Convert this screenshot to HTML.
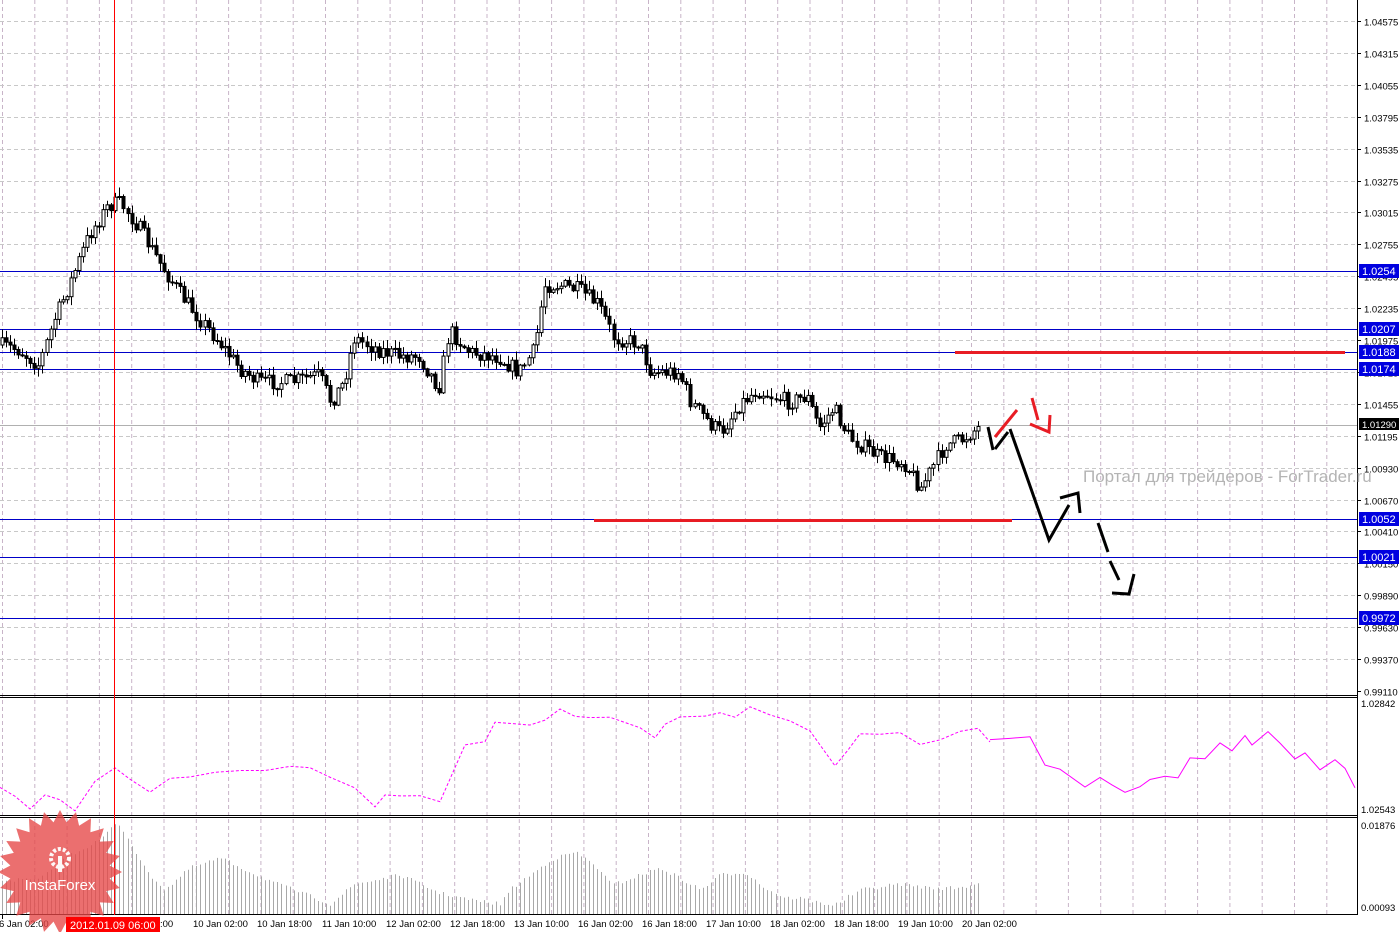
<!DOCTYPE html>
<html><head><meta charset="utf-8"><style>
html,body{margin:0;padding:0;background:#fff;width:1399px;height:932px;overflow:hidden}
svg{display:block;font-family:"Liberation Sans",Tahoma,sans-serif}
.ax{font-size:9.5px;fill:#000}
.lb{font-size:11px;fill:#fff}
</style></head><body>
<svg id="s" width="1399" height="932" xmlns="http://www.w3.org/2000/svg">
<rect width="1399" height="932" fill="#fff"/>
<g id="grid"></g>
<g id="vol"></g>
<g id="ind"></g>
<g stroke="#000" stroke-width="1">
<line x1="0" y1="695.5" x2="1357" y2="695.5"/><line x1="0" y1="697.5" x2="1357" y2="697.5"/>
<line x1="0" y1="815.5" x2="1357" y2="815.5"/><line x1="0" y1="817.5" x2="1357" y2="817.5"/>
<line x1="0" y1="914.5" x2="1357" y2="914.5"/>
<line x1="1357.5" y1="0" x2="1357.5" y2="915"/>
</g>
<g stroke="#0000c8" stroke-width="1">
<line x1="0" y1="271.5" x2="1357" y2="271.5"/>
<line x1="0" y1="329.5" x2="1357" y2="329.5"/>
<line x1="0" y1="352.5" x2="1357" y2="352.5"/>
<line x1="0" y1="369.5" x2="1357" y2="369.5"/>
<line x1="0" y1="519.5" x2="1357" y2="519.5"/>
<line x1="0" y1="557.5" x2="1357" y2="557.5"/>
<line x1="0" y1="618.5" x2="1357" y2="618.5"/>
</g>
<line x1="0" y1="425.5" x2="1357" y2="425.5" stroke="#b0b0b0"/>
<g id="candles"></g>
<line x1="114.5" y1="0" x2="114.5" y2="915" stroke="#f00"/>
<line x1="955" y1="352.5" x2="1345" y2="352.5" stroke="#e81c24" stroke-width="3"/>
<line x1="594" y1="520.5" x2="1012" y2="520.5" stroke="#e81c24" stroke-width="3"/>
<g fill="none" stroke="#000" stroke-width="3" stroke-linejoin="miter">
<polyline points="988,427 993,450"/>
<polyline points="995,449 1008,432"/>
<polyline points="1010,429 1049,540 1069,505"/>
<polyline points="1060,498 1078,493 1080,513"/>
<polyline points="1098,523 1108,552"/>
<polyline points="1110,561 1119,580"/>
<polyline points="1112,593 1129,594 1134,574"/>
</g>
<g fill="none" stroke="#e81c24" stroke-width="3">
<polyline points="995,437 1017,410"/>
<polyline points="1032,398 1038,420"/>
<polyline points="1030,424 1049,432 1050,415"/>
</g>
<text x="1083" y="482" font-size="17" fill="#b4b4b4">Портал для трейдеров - ForTrader.ru</text>
<g class="ax" id="axl"></g>
<g>
<rect x="1359" y="264" width="40" height="14" fill="#0000e0"/><text x="1362" y="275" class="lb">1.0254</text>
<rect x="1359" y="322" width="40" height="14" fill="#0000e0"/><text x="1362" y="333" class="lb">1.0207</text>
<rect x="1359" y="345" width="40" height="14" fill="#0000e0"/><text x="1362" y="356" class="lb">1.0188</text>
<rect x="1359" y="362" width="40" height="14" fill="#0000e0"/><text x="1362" y="373" class="lb">1.0174</text>
<rect x="1359" y="512" width="40" height="14" fill="#0000e0"/><text x="1362" y="523" class="lb">1.0052</text>
<rect x="1359" y="550" width="40" height="14" fill="#0000e0"/><text x="1362" y="561" class="lb">1.0021</text>
<rect x="1359" y="611" width="40" height="14" fill="#0000e0"/><text x="1362" y="622" class="lb">0.9972</text>
<rect x="1359" y="418" width="40" height="12" fill="#000"/><text x="1362" y="428" font-size="9.5" fill="#fff">1.01290</text>
</g>
<g class="ax">
<text x="1361" y="707">1.02842</text><text x="1361" y="813">1.02543</text>
<text x="1361" y="829">0.01876</text><text x="1361" y="911">0.00093</text>
</g>
<g class="ax">
<line x1="2.5" y1="915" x2="2.5" y2="919" stroke="#000"/>
<text x="-1" y="927">6 Jan 02:00</text>
<text x="160" y="927">:00</text>
<text x="193" y="927">10 Jan 02:00</text>
<text x="257" y="927">10 Jan 18:00</text>
<text x="322" y="927">11 Jan 10:00</text>
<text x="386" y="927">12 Jan 02:00</text>
<text x="450" y="927">12 Jan 18:00</text>
<text x="514" y="927">13 Jan 10:00</text>
<text x="578" y="927">16 Jan 02:00</text>
<text x="642" y="927">16 Jan 18:00</text>
<text x="706" y="927">17 Jan 10:00</text>
<text x="770" y="927">18 Jan 02:00</text>
<text x="834" y="927">18 Jan 18:00</text>
<text x="898" y="927">19 Jan 10:00</text>
<text x="962" y="927">20 Jan 02:00</text>
</g>
<polygon id="star" fill="#e64646" fill-opacity="0.78"/>
<g fill="#fff" opacity="0.95">
<circle cx="60" cy="858" r="9" fill="none" stroke="#fff" stroke-width="4" stroke-dasharray="3 2"/>
<rect x="58" y="856" width="4" height="16"/>
</g>
<text x="60" y="890" font-size="15" fill="#fff" text-anchor="middle">InstaForex</text>
<rect x="66" y="917" width="94" height="15" fill="#f00"/>
<text x="70" y="929" font-size="11" fill="#fff">2012.01.09 06:00</text>
</svg>
<script>
(function(){
var NS="http://www.w3.org/2000/svg";
function el(p,t,a){var e=document.createElementNS(NS,t);for(var k in a)e.setAttribute(k,a[k]);p.appendChild(e);return e;}
var grid=document.getElementById('grid');
for(var x=2.5;x<1357;x+=32.3){el(grid,'line',{x1:x,y1:0,x2:x,y2:915,stroke:'#c8b4c8','stroke-dasharray':'4 3'});}
var labs=["1.04575","1.04315","1.04055","1.03795","1.03535","1.03275","1.03015","1.02755","1.02495","1.02235","1.01975","1.01715","1.01455","1.01195","1.00930","1.00670","1.00410","1.00150","0.99890","0.99630","0.99370","0.99110"];
var axl=document.getElementById('axl');
for(var i=0;i<22;i++){var y=Math.round(21+i*31.9)+0.5;
 if(i<21)el(grid,'line',{x1:0,y1:y,x2:1357,y2:y,stroke:'#c8c8c8','stroke-dasharray':'4 3'});
 el(axl,'line',{x1:1357,y1:y,x2:1361,y2:y,stroke:'#000'});
 var t=el(axl,'text',{x:1364,y:y+4});t.textContent=labs[i];}
function interp(pts,x){for(var i=1;i<pts.length;i++){if(x<=pts[i][0]){var a=pts[i-1],b=pts[i];return a[1]+(b[1]-a[1])*(x-a[0])/(b[0]-a[0]);}}return pts[pts.length-1][1];}
var seed=7;function rnd(){seed=(seed*16807)%2147483647;return seed/2147483647;}
var P=[[0,345],[20,350],[40,365],[55,320],[70,285],[90,235],[110,205],[122,203],[140,228],[160,262],[180,292],[200,318],[220,342],[240,368],[260,382],[290,382],[320,375],[332,402],[345,382],[355,338],[380,350],[400,356],[420,356],[440,388],[450,330],[470,352],[500,357],[520,372],[535,350],[545,285],[560,285],[580,290],[600,305],[615,338],[640,343],[652,372],[680,372],[692,402],[712,425],[722,432],[740,405],[758,390],[790,402],[808,396],[820,428],[835,408],[850,437],[880,457],[905,462],[922,488],[932,470],[946,445],[962,440],[978,428]];
var cg=document.getElementById('candles');var prev=interp(P,0);
for(var x=1;x<=978;x+=4.05){var c=interp(P,x+2)+(rnd()-0.5)*16;var o=prev;var hi=Math.min(o,c)-rnd()*8-1,lo=Math.max(o,c)+rnd()*8+1;
 var cx=Math.round(x)+1.5;el(cg,'line',{x1:cx,y1:hi,x2:cx,y2:lo,stroke:'#000'});
 var bt=Math.min(o,c),h=Math.max(Math.abs(o-c),1);
 el(cg,'rect',{x:cx-1.5,y:bt,width:3,height:h,fill:(c>o?'#000':'#fff'),stroke:'#000','stroke-width':1});prev=c;}
var I1=[[0,790],[15,795],[30,810],[45,792],[60,802],[75,808],[95,782],[115,765],[130,782],[150,790],[170,780],[190,775],[215,775],[240,770],[265,772],[290,765],[310,770],[330,775],[355,790],[375,805],[385,795],[400,795],[420,798],[440,800],[465,745],[485,740],[495,725],[530,725],[545,723],[560,707],[575,718],[590,715],[610,720],[640,725],[655,738],[665,722],[680,718],[705,714],[720,713],[735,716],[750,707],[770,714],[790,722],[810,730],[835,767],[848,750],[860,735],[880,733],[900,735],[920,742],[940,740],[960,730],[978,730],[990,740]];
var I2=[[990,740],[1010,738],[1030,738],[1045,765],[1060,770],[1085,785],[1100,778],[1112,782],[1125,795],[1140,785],[1150,780],[1165,775],[1178,780],[1190,757],[1205,760],[1220,742],[1232,752],[1245,735],[1252,745],[1268,731],[1280,745],[1295,757],[1305,753],[1320,767],[1335,760],[1345,768],[1355,790]];
var ig=document.getElementById('ind');
function jit(a){return a.map(function(p,i){return p[0]+','+(p[1]+(i%2?3:-3)*rnd())}).join(' ');}
el(ig,'polyline',{points:jit(I1),fill:'none',stroke:'#ff00ff','stroke-dasharray':'3 2'});
el(ig,'polyline',{points:jit(I2),fill:'none',stroke:'#ff00ff'});
var V=[[0,880],[40,880],[60,860],[100,840],[118,822],[130,842],[145,870],[165,890],[190,868],[220,858],[250,872],[280,885],[315,898],[330,904],[355,884],[400,875],[440,893],[470,900],[500,904],[510,890],[550,860],[575,852],[595,865],[612,885],[640,875],[660,868],[680,878],[700,890],[720,875],[745,872],[765,888],[785,898],[800,898],[820,903],[835,905],[860,890],[900,884],[930,888],[960,888],[980,882]];
var vg=document.getElementById('vol');
for(var x=2;x<=980;x+=4.05){var y=interp(V,x)+(rnd()-0.5)*4;var cx=Math.round(x)+0.5;el(vg,'line',{x1:cx,y1:y,x2:cx,y2:914,stroke:'#a8a8a8'});}
var st=[],n=24,cx0=60,cy0=872;for(var i=0;i<n*2;i++){var r=i%2?50:62,a=Math.PI*i/n;st.push((cx0+r*Math.sin(a)).toFixed(1)+','+(cy0-r*Math.cos(a)).toFixed(1));}
document.getElementById('star').setAttribute('points',st.join(' '));
})();
</script>
</body></html>
